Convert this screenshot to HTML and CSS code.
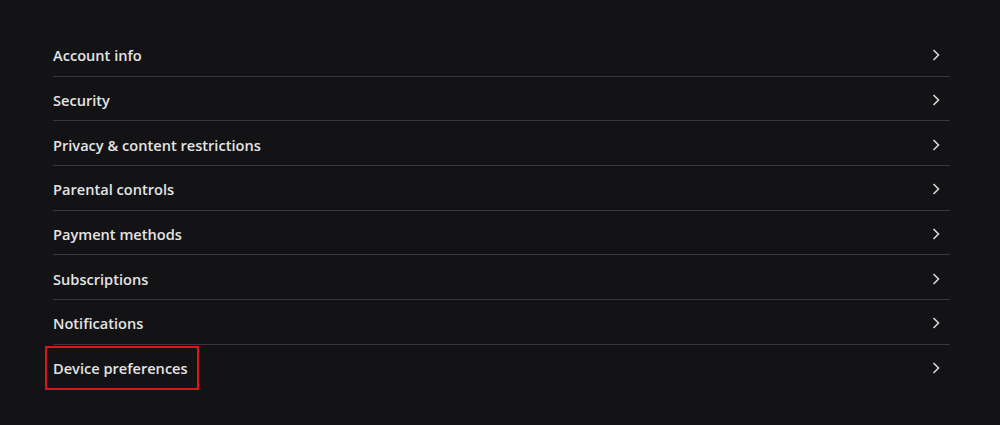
FILE: index.html
```html
<!DOCTYPE html>
<html lang="en">
<head>
<meta charset="utf-8">
<title>Settings</title>
<link rel="stylesheet" href="styles.css">
</head>
<body>
<main class="page">
  <ul class="menu">
    <li class="item"><span class="label">Account info</span><svg class="chev" viewBox="0 0 8 12"><path d="M1.5 1 L6.5 6 L1.5 11"/></svg></li>
    <li class="item"><span class="label">Security</span><svg class="chev" viewBox="0 0 8 12"><path d="M1.5 1 L6.5 6 L1.5 11"/></svg></li>
    <li class="item"><span class="label">Privacy &amp; content restrictions</span><svg class="chev" viewBox="0 0 8 12"><path d="M1.5 1 L6.5 6 L1.5 11"/></svg></li>
    <li class="item"><span class="label">Parental controls</span><svg class="chev" viewBox="0 0 8 12"><path d="M1.5 1 L6.5 6 L1.5 11"/></svg></li>
    <li class="item"><span class="label">Payment methods</span><svg class="chev" viewBox="0 0 8 12"><path d="M1.5 1 L6.5 6 L1.5 11"/></svg></li>
    <li class="item"><span class="label">Subscriptions</span><svg class="chev" viewBox="0 0 8 12"><path d="M1.5 1 L6.5 6 L1.5 11"/></svg></li>
    <li class="item"><span class="label">Notifications</span><svg class="chev" viewBox="0 0 8 12"><path d="M1.5 1 L6.5 6 L1.5 11"/></svg></li>
    <li class="item last"><span class="label highlight">Device preferences</span><svg class="chev" viewBox="0 0 8 12"><path d="M1.5 1 L6.5 6 L1.5 11"/></svg></li>
  </ul>
</main>
</body>
</html>
```
FILE: styles.css
```css
html, body {
  margin: 0;
  padding: 0;
  background: #131315;
  height: 100%;
}
body {
  font-family: "Open Sans", "Noto Sans", sans-serif;
  color: #e4e4e4;
}
.page {
  padding: 32px 50px 0 53px;
}
.menu {
  list-style: none;
  margin: 0;
  padding: 0;
}
.item {
  display: flex;
  align-items: center;
  justify-content: space-between;
  height: 40.67px;
  padding-top: 3px;
  border-bottom: 1px solid #38383b;
}
.item.last {
  border-bottom: none;
}
.label {
  font-size: 14.6px;
  font-weight: 600;
  letter-spacing: 0;
  position: relative;
}
.highlight::after {
  content: "";
  position: absolute;
  left: -8px;
  right: -11px;
  top: -12px;
  bottom: -12px;
  border: 2px solid #d8161b;
}
.chev {
  width: 8px;
  height: 12px;
  margin-right: 10px;
  fill: none;
  stroke: #d8d8d8;
  stroke-width: 1.6;
}
```
